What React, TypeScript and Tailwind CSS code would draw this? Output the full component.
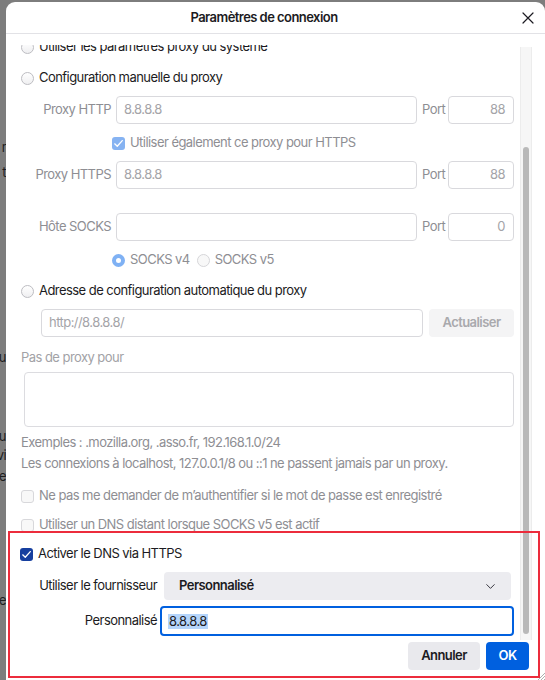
import React from 'react';
import { ChevronDown } from 'lucide-react';

const dim = 'text-[#8e8e93]';

const Radio = ({ checked = false, disabled = false }: { checked?: boolean; disabled?: boolean }) => {
  if (checked) {
    return <span className="block w-[13px] h-[13px] shrink-0 rounded-full border-[4px] border-[#7fb1f4] bg-white" />;
  }
  return (
    <span
      className={`block w-[13px] h-[13px] shrink-0 rounded-full border ${
        disabled ? 'border-[#d6d6d9] bg-[#f8f8f8]' : 'border-[#bdbdc2] bg-gradient-to-b from-white to-[#efeff1]'
      }`}
    />
  );
};

const Check = ({ checked = false, disabled = false }: { checked?: boolean; disabled?: boolean }) => {
  if (checked) {
    return (
      <span
        className={`flex items-center justify-center w-[13px] h-[13px] shrink-0 rounded-[3px] ${
          disabled ? 'bg-[#86b3f2]' : 'bg-[#163f9f]'
        }`}
      >
        <svg width="11" height="11" viewBox="0 0 16 16" fill="none">
          <path d="M2.5 8.5 L6.2 12 L13.5 3.8" stroke="white" strokeWidth="1.9" strokeLinecap="round" strokeLinejoin="round" />
        </svg>
      </span>
    );
  }
  return <span className="block w-[13px] h-[13px] shrink-0 rounded-[3px] border border-[#d8d8db] bg-[#f8f8f8]" />;
};

const Field = ({ value = '', right = false, className = '' }: { value?: string; right?: boolean; className?: string }) => (
  <div
    className={`h-[28px] shrink-0 rounded-[4px] border border-[#d9d9dd] bg-white flex items-center px-[7px] text-[#a4a4a8] ${
      right ? 'justify-end pr-[8px]' : ''
    } ${className}`}
  >
    {value}
  </div>
);

const ProxyRow = ({ label, host, port, mt }: { label: string; host: string; port: string; mt: string }) => (
  <div className={`flex items-center h-[28px] ${mt}`}>
    <div className={`w-[105px] shrink-0 text-right ${dim}`}>{label}</div>
    <Field value={host} className="ml-[5px] w-[301px]" />
    <div className={`w-[31px] shrink-0 pl-[5px] ${dim}`}>Port</div>
    <Field value={port} right className="w-[66px]" />
  </div>
);

const Backdrop = () => (
  <div className="w-[6px] shrink-0 overflow-hidden flex flex-col items-end text-[#1e1e1e] leading-[16px]">
    <span className="mt-[139px] h-[16px]">r</span>
    <span className="mt-[9px] h-[16px]">t</span>
    <span className="mt-[169px] h-[16px]">u</span>
    <span className="mt-[63px] h-[16px]">u</span>
    <span className="mt-[3px] h-[16px]">vi</span>
    <span className="mt-[5px] h-[16px]">e</span>
    <span className="mt-[108px] h-[16px]">te</span>
  </div>
);

export default function App() {
  return (
    <div className="w-[545px] h-[680px] overflow-hidden bg-[#7d7d7d] flex font-['Inter',sans-serif] text-[13px] tracking-[-0.55px] text-[#1c1b22]">
      <Backdrop />
      <div className="relative mt-[2px] w-[539px] h-[700px] shrink-0 bg-white rounded-t-[9px] flex flex-col">
        {/* Header */}
        <div className="h-[32px] shrink-0 flex items-center border-b border-[#e2e2e6]">
          <div className="flex-1 text-center font-semibold">Paramètres de connexion</div>
          <div className="w-[23px] shrink-0 flex items-center">
            <svg width="12" height="12" viewBox="0 0 12 12">
              <path d="M1 1 L11 11 M11 1 L1 11" stroke="#1c1b22" strokeWidth="1.2" strokeLinecap="round" />
            </svg>
          </div>
        </div>

        {/* Body */}
        <div className="h-[606px] shrink-0 flex">
          <div className="w-[514px] shrink-0 flex flex-col pt-[11px]">
            <div className="flex-1 overflow-hidden">
              <div className="flex flex-col pr-[6px]">
                <div className="flex items-center h-[20px] mt-[-8px] pl-[15px] gap-[5px]">
                  <Radio />
                  <span>Utiliser les paramètres proxy du système</span>
                </div>
                <div className="flex items-center h-[20px] mt-[11px] pl-[15px] gap-[5px]">
                  <Radio />
                  <span>Configuration manuelle du proxy</span>
                </div>

                <ProxyRow label="Proxy HTTP" host="8.8.8.8" port="88" mt="mt-[8px]" />

                <div className="flex items-center h-[20px] mt-[9px] pl-[106px] gap-[5px]">
                  <Check checked disabled />
                  <span className={dim}>Utiliser également ce proxy pour HTTPS</span>
                </div>

                <ProxyRow label="Proxy HTTPS" host="8.8.8.8" port="88" mt="mt-[8px]" />
                <ProxyRow label="Hôte SOCKS" host="" port="0" mt="mt-[24px]" />

                <div className="flex items-center h-[20px] mt-[9px] pl-[106px]">
                  <Radio checked />
                  <span className={`ml-[5px] ${dim}`}>SOCKS v4</span>
                  <span className="ml-[7px]">
                    <Radio disabled />
                  </span>
                  <span className={`ml-[5px] ${dim}`}>SOCKS v5</span>
                </div>

                <div className="flex items-center h-[20px] mt-[11px] pl-[15px] gap-[5px]">
                  <Radio />
                  <span>Adresse de configuration automatique du proxy</span>
                </div>

                <div className="flex items-center h-[28px] mt-[8px] pl-[35px]">
                  <Field value="http://8.8.8.8/" className="w-[382px]" />
                  <div className="ml-[6px] w-[85px] h-[28px] rounded-[4px] bg-[#f4f4f5] flex items-center justify-center font-semibold text-[#a9a9ad]">
                    Actualiser
                  </div>
                </div>

                <div className="flex items-center h-[20px] mt-[11px] pl-[15px] text-[#a2a2a6]">Pas de proxy pour</div>
                <div className="mt-[4px] ml-[18px] h-[55px] rounded-[4px] border border-[#dcdce0] bg-white" />

                <div className={`flex items-center h-[20px] mt-[6px] pl-[15px] ${dim}`}>
                  Exemples : .mozilla.org, .asso.fr, 192.168.1.0/24
                </div>
                <div className={`flex items-center h-[20px] mt-[1px] pl-[15px] ${dim}`}>
                  Les connexions à localhost, 127.0.0.1/8 ou ::1 ne passent jamais par un proxy.
                </div>

                <div className="flex items-center h-[20px] mt-[12px] pl-[15px] gap-[5px]">
                  <Check disabled />
                  <span className={dim}>Ne pas me demander de m’authentifier si le mot de passe est enregistré</span>
                </div>
                <div className="flex items-center h-[20px] mt-[9px] pl-[15px] gap-[5px]">
                  <Check disabled />
                  <span className={dim}>Utiliser un DNS distant lorsque SOCKS v5 est actif</span>
                </div>

                <div className="flex items-center h-[20px] mt-[9px] pl-[14px] gap-[5px]">
                  <Check checked />
                  <span>Activer le DNS via HTTPS</span>
                </div>

                <div className="flex items-center h-[28px] mt-[8px]">
                  <div className="w-[151px] shrink-0 text-right">Utiliser le fournisseur</div>
                  <div className="ml-[7px] w-[347px] h-[28px] rounded-[4px] bg-[#ececf0] flex items-center justify-between pl-[15px] pr-[13px]">
                    <span className="font-semibold">Personnalisé</span>
                    <ChevronDown size={15} strokeWidth={1.5} color="#2b2a33" />
                  </div>
                </div>

                <div className="flex items-center h-[30px] mt-[6px]">
                  <div className="w-[151px] shrink-0 text-right">Personnalisé</div>
                  <div className="ml-[3px] w-[354px] h-[30px] rounded-[4px] border-2 border-[#0060df] flex items-center pl-[6px]">
                    <span className="bg-[#b5d5fb] leading-[15px] px-[1px]">8.8.8.8</span>
                  </div>
                </div>
              </div>
            </div>
          </div>

          {/* Scrollbar */}
          <div className="w-[12px] shrink-0 flex flex-col pt-[13px]">
            <div className="flex-1 bg-[#f6f6f6] border-x border-[#ececec] flex justify-center">
              <div className="mt-[100px] w-[6px] h-[487px] rounded-full bg-[#b9b9b9]" />
            </div>
          </div>
          <div className="w-[13px] shrink-0" />
        </div>

        {/* Footer */}
        <div className="flex justify-end gap-[6px] pr-[16px] pt-[2px]">
          <div className="w-[72px] h-[28px] rounded-[4px] bg-[#e9e9ed] flex items-center justify-center font-semibold">Annuler</div>
          <div className="w-[43px] h-[28px] rounded-[4px] bg-[#0060df] flex items-center justify-center font-semibold text-white">OK</div>
        </div>

        {/* Annotation highlight */}
        <div className="absolute left-[2px] top-[529px] w-[532px] h-[147px] border-2 border-[#ec2c3c] pointer-events-none" />

        {/* Resize grip */}
        <svg className="absolute right-[0px] top-[670px]" width="8" height="8" viewBox="0 0 8 8">
          <path d="M8 1 L1 8 M8 4 L4 8 M8 7 L7 8" stroke="#9a9a9a" strokeWidth="0.8" />
        </svg>
      </div>
    </div>
  );
}
